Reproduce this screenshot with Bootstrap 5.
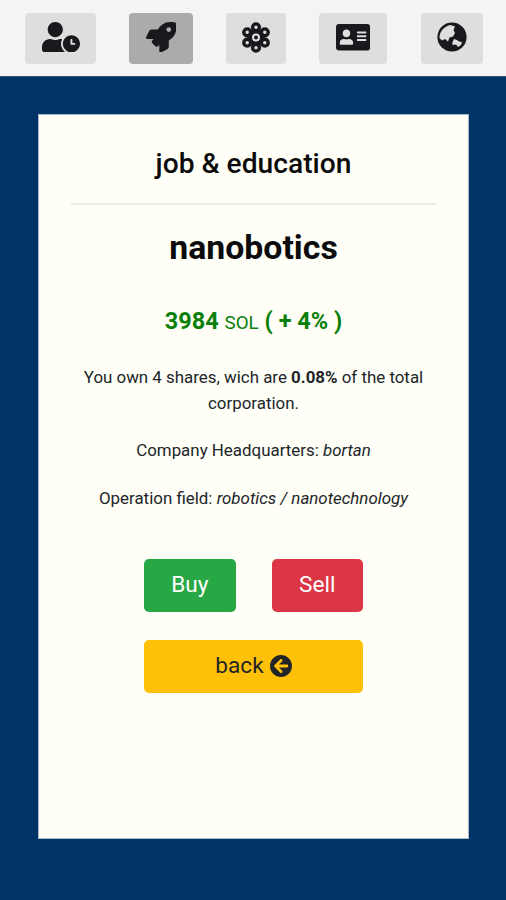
<!DOCTYPE html>
<html lang="en">
<head>
<meta charset="utf-8">
<meta name="viewport" content="width=device-width, initial-scale=1">
<title>nanobotics</title>
<link href="https://cdn.jsdelivr.net/npm/bootstrap@5.3.0/dist/css/bootstrap.min.css" rel="stylesheet">
<style>
body { font-family: Roboto, sans-serif; background: #003366; color: #212529; height: 900px; overflow: hidden; }
.topbar { height: 77px; background: #f4f4f4; padding: 13px 23.5px 0 25px; border-bottom: 1px solid #33526f; }
.tab-btn { height: 51px; padding: 0 0 3px; border: 0; border-radius: 4px; background: #dedede; color: #17191c; }
.tab-btn.active, .tab-btn:hover { background: #ababab; color: #17191c; }
.tab-btn svg, .back-icon { display: block; fill: currentColor; }
.w-clock { width: 71px; } .w-rocket { width: 64px; } .w-atom { width: 60px; } .w-id { width: 68px; } .w-globe { width: 62px; }
.panel { margin: 37px 37px 0 38px; height: 725px; background: #fffff7; border: 1px solid #a9b8c3; padding: 0 32px; color: #212529; }
.panel-title { font-size: 28.2px; font-weight: 500; line-height: 32px; margin: 33px 0 0; color: #0b0b0b; }
.panel-rule { margin: 23px 0 0; border-top: 2px solid #ecece4; opacity: 1; }
.company { font-size: 33.8px; font-weight: 700; line-height: 40px; margin: 23px 0 0; color: #0b0b0b; }
.price { font-size: 23.5px; font-weight: 700; line-height: 28px; margin: 39px 0 28px; color: #0a800a; }
.price small { font-size: 18.8px; font-weight: 400; }
.info { font-size: 16.9px; line-height: 25.5px; margin: 0 -4px 22.3px; }
.actions { width: 219px; margin-top: 47px; gap: 28px 36px; }
.act { height: 53px; font-size: 22.6px; line-height: 1; border: 0; border-radius: 5px; padding: 1px 0 0; }
.act-buy { background: #28a745; color: #fff; } .act-sell { background: #dc3545; color: #fff; }
.act-back { background: #ffc107; color: #212529; gap: 6px; }
.back-icon { margin-top: -2px; }
</style>
<script src="https://cdn.jsdelivr.net/npm/bootstrap@5.3.0/dist/js/bootstrap.bundle.min.js"></script>
</head>
<body>
<nav class="topbar d-flex justify-content-between align-items-start">
  <button class="btn tab-btn w-clock d-flex align-items-center justify-content-center" aria-label="Profile"><svg width="38" height="30.4" viewBox="0 0 640 512"><path d="M496 224c-79.6 0-144 64.4-144 144s64.4 144 144 144 144-64.4 144-144-64.4-144-144-144zm64 150.3c0 5.3-4.4 9.7-9.7 9.7h-60.6c-5.3 0-9.7-4.4-9.7-9.7v-76.6c0-5.3 4.4-9.7 9.7-9.7h12.6c5.3 0 9.7 4.4 9.7 9.7V352h38.3c5.3 0 9.7 4.4 9.7 9.7v12.6zM320 368c0-27.8 6.7-54.1 18.2-77.5-8-1.5-16.2-2.5-24.6-2.5h-16.7c-22.2 10.2-46.9 16-72.9 16s-50.6-5.8-72.9-16h-16.7C60.2 288 0 348.2 0 422.4V464c0 26.5 21.5 48 48 48h347.1c-45.3-31.9-75.1-84.5-75.1-144zm-96-112c70.7 0 128-57.3 128-128S294.7 0 224 0 96 57.3 96 128s57.3 128 128 128z"/></svg></button>
  <button class="btn tab-btn active w-rocket d-flex align-items-center justify-content-center" aria-label="Jobs"><svg width="30.4" height="30.4" viewBox="0 0 512 512"><path d="M505.1 19.1c-1.2-5.5-6.7-11-12.2-12.2C460.7 0 435.5 0 410.4 0 307.2 0 245.3 55.2 199.1 128H94.8c-16.3 0-35.5 11.9-42.9 26.5L2.5 253.3A28.4 28.4 0 0 0 0 264a24 24 0 0 0 24 24h103.8l-22.5 22.5c-11.3 11.3-13 32.2 0 45.2l50.9 50.9c11.2 11.2 32.2 13.2 45.3 0l22.5-22.4V488a24 24 0 0 0 24 24 28.6 28.6 0 0 0 10.7-2.5l98.7-49.4c14.7-7.3 26.5-26.5 26.5-42.9V312.8c72.6-46.3 128.1-108.4 128.1-211.1 0-25.2 0-50.4-6.9-82.6zM384 168a40 40 0 1 1 40-40 40 40 0 0 1-40 40z"/></svg></button>
  <button class="btn tab-btn w-atom d-flex align-items-center justify-content-center" aria-label="Science"><svg width="28" height="31" viewBox="-14 -15.5 28 31"><circle r="9"/><g fill="#dedede" stroke="currentColor" stroke-width="3.4"><circle cy="-10.2" r="3.4"/><circle cy="10.2" r="3.4"/><circle cx="-8.8" cy="-5.2" r="3.4"/><circle cx="8.8" cy="-5.2" r="3.4"/><circle cx="-8.8" cy="5.2" r="3.4"/><circle cx="8.8" cy="5.2" r="3.4"/></g><circle r="5.4"/><circle r="3" fill="none" stroke="#dedede" stroke-width="2"/></svg></button>
  <button class="btn tab-btn w-id d-flex align-items-center justify-content-center" aria-label="Identity"><svg width="34.2" height="30.4" viewBox="0 0 576 512"><path d="M528 32H48C21.5 32 0 53.5 0 80v352c0 26.5 21.5 48 48 48h480c26.5 0 48-21.5 48-48V80c0-26.5-21.5-48-48-48zm-352 96c35.3 0 64 28.7 64 64s-28.7 64-64 64-64-28.7-64-64 28.7-64 64-64zm112 236.8c0 10.6-10 19.2-22.4 19.2H86.4C74 384 64 375.4 64 364.8v-19.2c0-31.8 30.1-57.6 67.2-57.6h5c12.3 5.1 25.7 8 39.8 8s27.6-2.9 39.8-8h5c37.1 0 67.2 25.8 67.2 57.6v19.2zM512 312c0 4.4-3.6 8-8 8H360c-4.4 0-8-3.6-8-8v-16c0-4.4 3.6-8 8-8h144c4.4 0 8 3.6 8 8v16zm0-64c0 4.4-3.6 8-8 8H360c-4.4 0-8-3.6-8-8v-16c0-4.4 3.6-8 8-8h144c4.4 0 8 3.6 8 8v16zm0-64c0 4.4-3.6 8-8 8H360c-4.4 0-8-3.6-8-8v-16c0-4.4 3.6-8 8-8h144c4.4 0 8 3.6 8 8v16z"/></svg></button>
  <button class="btn tab-btn w-globe d-flex align-items-center justify-content-center" aria-label="World"><svg width="30" height="30" viewBox="0 0 30 30"><circle cx="15" cy="15" r="14.6"/><path fill="#dedede" d="M2.5 16C2.3 9 8 4 13.5 3L18 4.5 16.5 8l1.5 3-2 3.500-3.500 1-1.500 4-3-2.500-3 1.500zM15.500 20l1.500-3 3 1 2 1.500 3 .5-1 3-3 2-2-2.500-3.500.5z"/></svg></button>
</nav>
<main class="panel text-center">
  <h1 class="panel-title">job &amp; education</h1>
  <hr class="panel-rule">
  <h2 class="company">nanobotics</h2>
  <p class="price">3984 <small>SOL</small> ( + 4% )</p>
  <p class="info">You own 4 shares, wich are <b>0.08%</b> of the total<br>corporation.</p>
  <p class="info">Company Headquarters: <i>bortan</i></p>
  <p class="info">Operation field: <i>robotics / nanotechnology</i></p>
  <div class="actions d-flex flex-wrap mx-auto">
    <button class="btn act act-buy flex-fill w-25">Buy</button>
    <button class="btn act act-sell flex-fill w-25">Sell</button>
    <button class="btn act act-back w-100 d-flex align-items-center justify-content-center">back <svg class="back-icon" width="22" height="22" viewBox="8 8 496 496"><path d="M256 504C119 504 8 393 8 256S119 8 256 8s248 111 248 248-111 248-248 248zm28.9-143.6L209.4 288H392c13.3 0 24-10.7 24-24v-16c0-13.3-10.7-24-24-24H209.4l75.5-72.4c9.7-9.3 9.9-24.8.4-34.3l-11-10.9c-9.4-9.4-24.6-9.4-33.9 0L107.7 239c-9.4 9.4-9.4 24.6 0 33.9l132.7 132.7c9.4 9.4 24.6 9.4 33.9 0l11-10.9c9.5-9.5 9.3-25-.4-34.3z"/></svg></button>
  </div>
</main>
</body>
</html>
